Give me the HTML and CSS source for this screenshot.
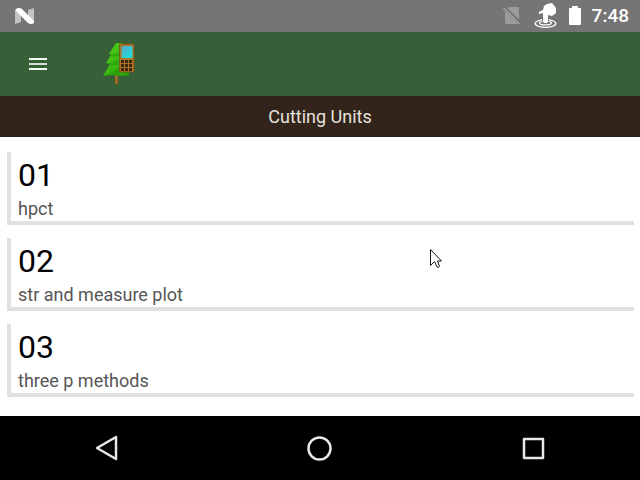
FILE: index.html
```html
<!DOCTYPE html>
<html lang="en">
<head>
<meta charset="utf-8">
<meta name="viewport" content="width=device-width, initial-scale=1">
<title>Cutting Units</title>
<link rel="stylesheet" href="styles.css">
</head>
<body>
<div class="status">
  <svg class="status-n" width="20" height="16" viewBox="0 0 20 16" aria-hidden="true">
    <path fill="#c4c4c4" d="M0 1l6 4v9l-6 2zM13 2l6-2v15l-6-4z"/>
    <path fill="#fff" d="M1 1q3-2 6 0l12 12v2q-3 2-6 0L1 3z"/>
  </svg>
  <div class="status-icons">
    <svg width="20" height="18" viewBox="0 0 20 18" aria-hidden="true">
      <path fill="#9c9c9c" d="M6 0h9q1 0 1 1v12L4 2zM2 4l13 13H3q-1 0-1-1z"/>
      <path fill="none" stroke="#757575" stroke-width="1.2" d="M2 0l16 15"/>
      <path fill="none" stroke="#a4a4a4" stroke-width="1.500" d="M.5 1l16 16"/>
    </svg>
    <svg width="24" height="26" viewBox="0 0 24 26" aria-hidden="true">
      <g fill="none" stroke="#fff" stroke-width="1.3"><ellipse cx="11.500" cy="20.500" rx="10.300" ry="3.900"/><ellipse cx="11.500" cy="20" rx="6" ry="1.900"/></g>
      <path stroke="#757575" stroke-width="6.500" d="M11.500 12v7"/>
      <path fill="#fff" d="M9 19V10L5 11q-1-2 1-2.500L9 7l1-4 3-2 5-1 4 5v5l-4 3-4-1v7q-2.500 2.500-5 0z"/>
    </svg>
    <svg width="12" height="20" viewBox="0 0 12 20" aria-hidden="true"><path fill="#fff" d="M3 0h6v2h2q1 0 1 1v15q0 1-1 1H1q-1 0-1-1V3q0-1 1-1h2z"/></svg>
    <time class="clock">7:48</time>
  </div>
</div>
<header class="toolbar">
  <button class="menu" type="button" aria-label="Open menu">
    <svg width="18" height="12" viewBox="0 0 18 12" aria-hidden="true"><path fill="#f4f8f2" d="M0 0h18v2H0zM0 10h18v2H0z"/><path fill="#d5e0d2" d="M0 5h18v2H0z"/></svg>
  </button>
  <svg class="logo" width="32" height="44" viewBox="0 0 32 44" role="img" aria-label="Tree and handheld">
    <defs>
      <linearGradient id="leaf" x1="0" y1="0" x2="1" y2="1"><stop offset="0" stop-color="#55d81a"/><stop offset="1" stop-color="#219d08"/></linearGradient>
      <linearGradient id="screen" x1="0" y1="0" x2="1" y2="1"><stop offset="0" stop-color="#5da9c0"/><stop offset="1" stop-color="#10e5e5"/></linearGradient>
    </defs>
    <path fill="#a8742a" stroke="#654319" stroke-width=".6" d="M12 32h3v10h-3z"/>
    <path fill="url(#leaf)" d="M13 1L6 12l2 1-5 8 4 1-7 12q7-1 10-1 8 2 17 0l-3-5-4-5V1z"/>
    <path fill="#198407" d="M6 12q5 1 9-2l1 4-7 1zM3 21q7 1 12-4v6H8zM0 34q9-3 16-8v7z" opacity=".35"/>
    <path fill="#ae7525" stroke="#795018" stroke-width=".8" d="M16.500 2H31v28H16.500z"/>
    <path fill="url(#screen)" d="M18.500 4h11v12h-11z"/>
    <path fill="#3d260d" d="M18 18h3v3h-3zM22 18h3v3h-3zM26 18h3v3h-3zM18 22h3v3h-3zM22 22h3v3h-3zM26 22h3v3h-3zM18 26h3v3h-3zM22 26h3v3h-3zM26 26h3v3h-3z"/>
  </svg>
</header>
<h1 class="title">Cutting Units</h1>
<main class="content">
  <ul class="units">
    <li class="unit"><h2 class="code">01</h2><p class="name">hpct</p></li>
    <li class="unit"><h2 class="code">02</h2><p class="name">str and measure plot</p></li>
    <li class="unit"><h2 class="code">03</h2><p class="name">three p methods</p></li>
  </ul>
</main>
<nav class="navbar">
  <button type="button" aria-label="Back"><svg width="26" height="26" viewBox="0 0 26 26" aria-hidden="true"><path d="M22 2v22L3 13z"/></svg></button>
  <button type="button" aria-label="Home"><svg width="26" height="26" viewBox="0 0 26 26" aria-hidden="true"><circle cx="12.500" cy="13.500" r="11"/></svg></button>
  <button type="button" aria-label="Recent apps"><svg width="26" height="26" viewBox="0 0 26 26" aria-hidden="true"><path d="M4 4h19v19H4z"/></svg></button>
</nav>
<svg class="cursor" width="13" height="21" viewBox="0 0 13 21" aria-hidden="true"><path fill="#fff" stroke="#15151f" d="M.5 1.500v16l4-4 2.500 5.500q1.500 1 2.500-.5L7.500 13h4z"/></svg>
</body>
</html>
```
FILE: styles.css
```css
* {
  box-sizing: border-box;
}

body {
  margin: 0;
  min-height: 100vh;
  display: flex;
  flex-direction: column;
  background: #fff;
  font-family: Roboto, "Liberation Sans", sans-serif;
}

svg {
  display: block;
}

button {
  display: flex;
  align-items: center;
  justify-content: center;
  padding: 0;
  border: 0;
  background: none;
}

.status {
  display: flex;
  align-items: center;
  justify-content: space-between;
  height: 32px;
  padding: 0 11px 0 15px;
  background: #757575;
  color: #fff;
}

.status-icons {
  display: flex;
  align-items: center;
  gap: 11px;
}

.clock {
  font-size: 19px;
  font-weight: 500;
  line-height: 32px;
}

.toolbar {
  display: flex;
  align-items: center;
  gap: 37px;
  height: 64px;
  padding: 0 10px;
  background: #356038;
}

.menu {
  width: 56px;
  height: 56px;
}

.title {
  margin: 0;
  padding: 9px 0 7px;
  border-bottom: 1px solid #251d18;
  background: #32241a;
  color: #e6e2dc;
  font-size: 18px;
  font-weight: 400;
  line-height: 24px;
  text-align: center;
}

.content {
  flex: 1;
  padding: 15px 6px 0 7px;
}

.units {
  display: grid;
  gap: 13px;
  margin: 0;
  padding: 0;
  list-style: none;
}

.unit {
  padding: 3px 7px 0;
  border: solid #e0e0e0;
  border-width: 0 0 4px 4px;
}

.code {
  margin: 0;
  color: #000;
  font-size: 32px;
  font-weight: 400;
  line-height: 40px;
}

.name {
  margin: 2px 0 0;
  color: #555;
  font-size: 18px;
  line-height: 24px;
}

.navbar {
  display: grid;
  grid-template-columns: repeat(3, 1fr);
  height: 64px;
  background: #000;
}

.navbar svg {
  fill: none;
  stroke: #e8e8e8;
  stroke-width: 2.5;
  stroke-linejoin: round;
}

.cursor {
  position: absolute;
  left: 430px;
  top: 248px;
}
```
